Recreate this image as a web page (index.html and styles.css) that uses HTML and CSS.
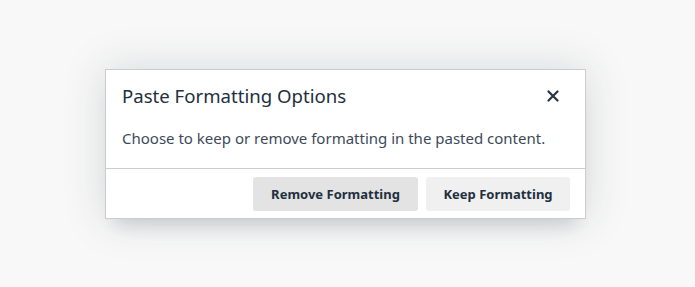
FILE: index.html
```html
<!DOCTYPE html>
<html lang="en">
<head>
<meta charset="utf-8">
<title>Paste Formatting Options</title>
<link rel="stylesheet" href="styles.css">
</head>
<body>
<div class="overlay">
  <div class="dialog" role="dialog" aria-labelledby="dlg-title">
    <div class="dialog-header">
      <h2 class="dialog-title" id="dlg-title">Paste Formatting Options</h2>
      <button class="close-btn" aria-label="Close">
        <svg width="12" height="12" viewBox="0 0 12 12"><path d="M1.5 1.5L10.5 10.5M10.5 1.5L1.5 10.5" stroke="#2b3442" stroke-width="2.2" stroke-linecap="round"/></svg>
      </button>
    </div>
    <div class="dialog-body">
      <p class="dialog-text">Choose to keep or remove formatting in the pasted content.</p>
    </div>
    <div class="dialog-footer">
      <button class="btn btn-remove">Remove Formatting</button>
      <button class="btn btn-keep">Keep Formatting</button>
    </div>
  </div>
</div>
</body>
</html>
```
FILE: styles.css
```css
html, body {
  margin: 0;
  padding: 0;
  height: 100%;
}
body {
  background: #f8f8f8;
  font-family: "Noto Sans", "Open Sans", sans-serif;
  color: #222f3e;
}
.overlay {
  height: 100%;
  display: flex;
  align-items: center;
  justify-content: center;
}
.dialog {
  width: 479px;
  background: #fff;
  border: 1px solid #cccccc;
  box-shadow: 0 16px 16px -10px rgba(34, 47, 62, 0.15), 0 0 40px 1px rgba(34, 47, 62, 0.15);
  margin-left: -4px;
  margin-top: 1px;
}
.dialog-header {
  display: flex;
  align-items: center;
  justify-content: space-between;
  padding: 12px 26px 0 16px;
  height: 28px;
}
.dialog-title {
  margin: 0;
  font-size: 18.6px;
  font-weight: 400;
  line-height: 28px;
  color: #222f3e;
}
.close-btn {
  border: 0;
  background: none;
  padding: 0;
  width: 12px;
  height: 12px;
  display: flex;
}
.dialog-body {
  padding: 16px 16px 18px;
}
.dialog-text {
  margin: 0;
  font-size: 15px;
  line-height: 24px;
  color: #3d4a5a;
}
.dialog-footer {
  border-top: 1px solid #cccccc;
  padding: 8px 15px 7px;
  display: flex;
  justify-content: flex-end;
  gap: 8px;
}
.btn {
  height: 34px;
  border: 0;
  border-radius: 3px;
  font-family: inherit;
  font-size: 13px;
  font-weight: 700;
  color: #222f3e;
  padding: 0 17px;
}
.btn-remove {
  background: #e3e3e3;
  width: 165px;
}
.btn-keep {
  background: #f0f0f0;
  width: 144px;
}
```
